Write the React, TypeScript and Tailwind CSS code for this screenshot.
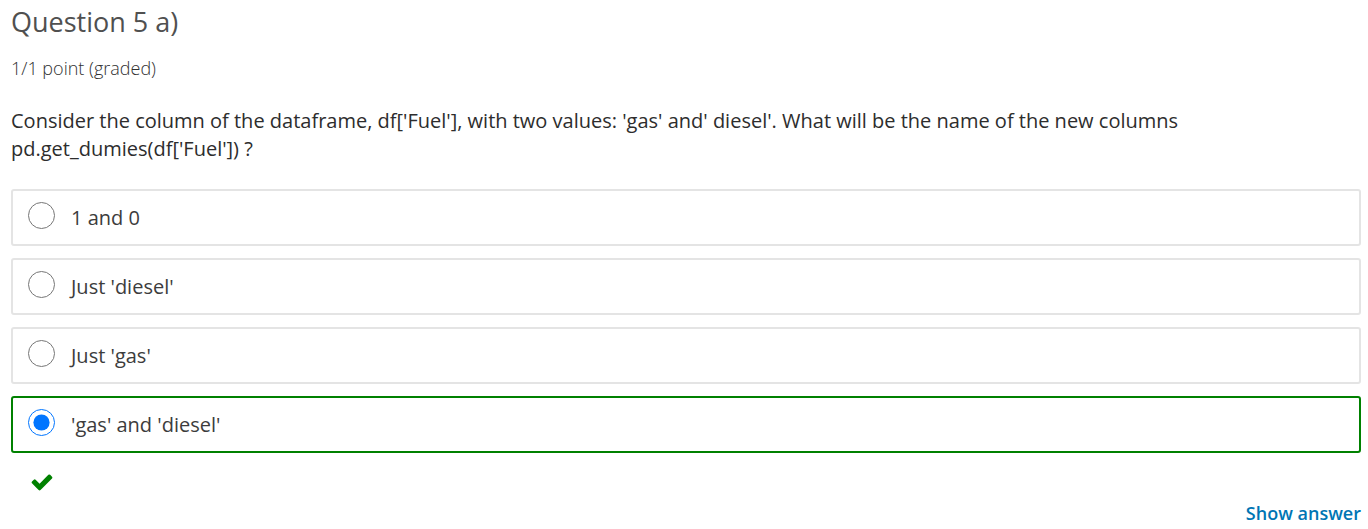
import { useState } from "react";

const choices = ["1 and 0", "Just 'diesel'", "Just 'gas'", "'gas' and 'diesel'"];
const correct = 3;

function CheckIcon() {
  return (
    <svg viewBox="0 0 1792 1792" className="size-6 fill-[#008100]" role="img" aria-label="correct">
      <path d="M1671 566q0 40-28 68l-724 724-136 136q-28 28-68 28t-68-28l-136-136-362-362q-28-28-28-68t28-68l136-136q28-28 68-28t68 28l294 295 656-657q28-28 68-28t68 28l136 136q28 28 28 68z" />
    </svg>
  );
}

export default function App() {
  const [selected, setSelected] = useState(correct);

  return (
    <main className="bg-white pt-1 pr-[7px] pl-[11px] font-['Open_Sans',sans-serif] text-[#3c3c3c]">
      <h3 className="text-[27px] leading-9 text-[#505050]">Question 5 a)</h3>
      <p className="mt-4 text-[18px] leading-6 font-light text-[#313131]">1/1 point (graded)</p>
      <form className="pt-[27px]">
        <fieldset>
          <legend className="mb-[26px] text-[20px] leading-7 text-[#2d2d2d]">
            Consider the column of the dataframe, df['Fuel'], with two values: 'gas' and' diesel'. What will be the name of the new columns
            <br />
            pd.get_dumies(df['Fuel']) ?
          </legend>
          <div className="flex flex-col gap-3">
            {choices.map((choice, i) => (
              <label
                key={choice}
                className={`flex h-[57px] items-center gap-4 rounded-[3px] border-2 px-[15px] text-[20px] leading-7 ${
                  selected === i && i === correct ? "border-[#008100]" : "border-[#e4e4e4]"
                }`}
              >
                <input
                  type="radio"
                  name="answer"
                  checked={selected === i}
                  onChange={() => setSelected(i)}
                  className="mb-1 size-[27px] shrink-0"
                />
                {choice}
              </label>
            ))}
          </div>
        </fieldset>
        <div className="mt-[17px] ml-[19px]">
          <CheckIcon />
        </div>
        <div className="mt-[7px] flex justify-end">
          <button type="button" className="text-[18px] leading-6 font-semibold text-[#0075b4]">
            Show answer
          </button>
        </div>
      </form>
    </main>
  );
}
